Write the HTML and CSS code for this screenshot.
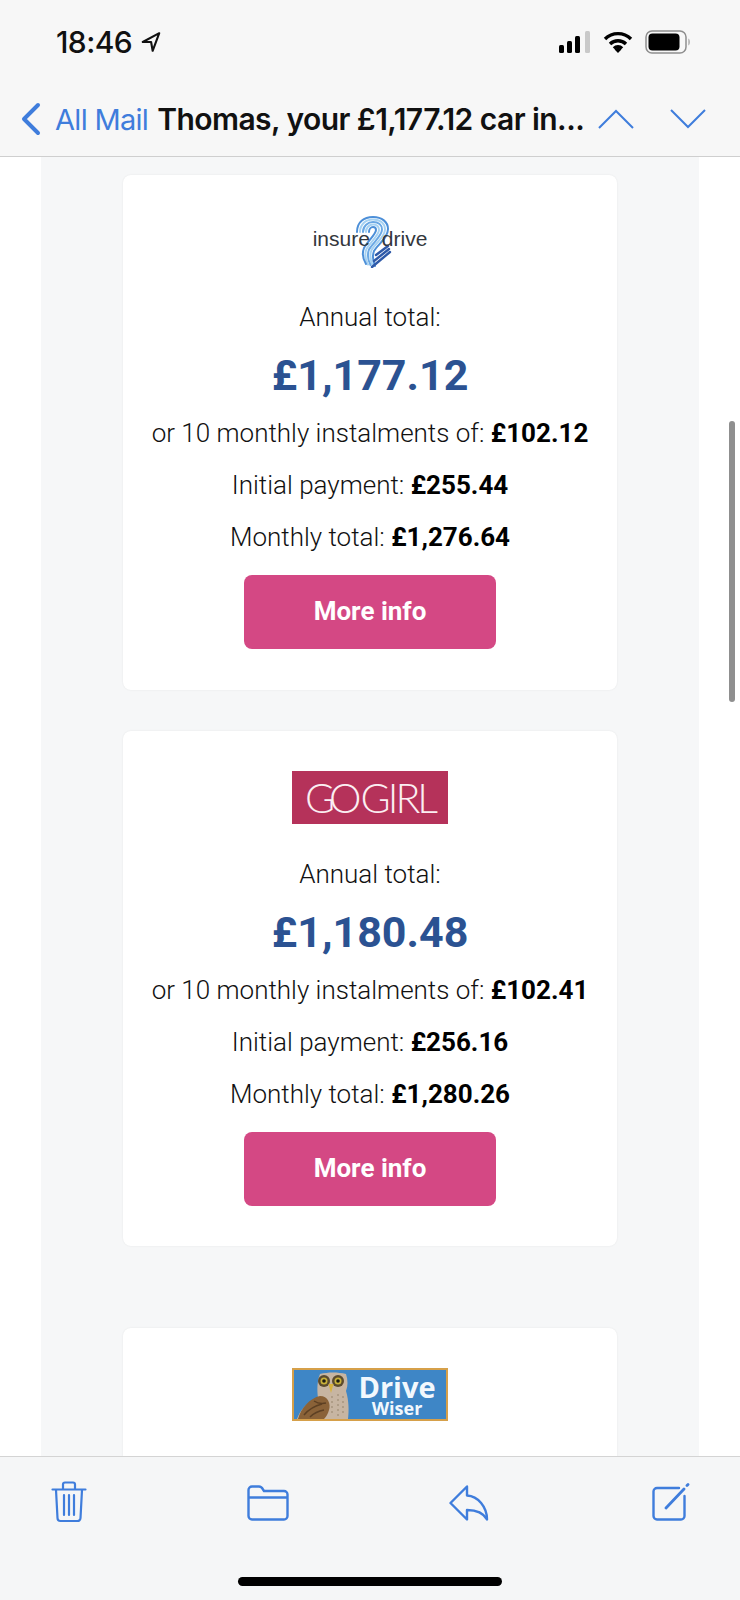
FILE: index.html
```html
<!DOCTYPE html>
<html lang="en">
<head>
    <meta charset="UTF-8">
    <meta name="viewport" content="width=device-width, initial-scale=1.0">
    <title>All Mail</title>
    <link rel="stylesheet" href="styles.css">
</head>
<body>

<div class="phone">
    <header class="top-bar">
        <div class="status">
            <div class="status-left">
                <span class="time">18:46</span>
                <svg class="loc" width="20" height="22" viewBox="0 0 18 20"><path d="M16.5 2 1.500 10h7.600l1.400 8z" fill="none" stroke="#111" stroke-width="1.900" stroke-linejoin="round"/></svg>
            </div>
            <div class="status-right">
                <svg width="32" height="22" viewBox="0 0 32 22"><rect x="0" y="14" width="5" height="8" rx="1.500" fill="#000"/><rect x="8" y="10" width="5" height="12" rx="1.500" fill="#000"/><rect x="16" y="5" width="5" height="17" rx="1.500" fill="#000"/><rect x="26" y="0" width="5" height="22" rx="1.500" fill="#c9c9c9"/></svg>
                <svg width="30" height="22" viewBox="0 0 30 22"><path d="M2 8a18.500 18.500 0 0 1 26 0M7 13a11.500 11.500 0 0 1 16 0M11 17.500a5.500 5.500 0 0 1 8 0" fill="none" stroke="#000" stroke-width="3.400"/><path d="M15 22l-3.400-3.600a5 5 0 0 1 6.800 0z" fill="#000"/></svg>
                <svg width="46" height="24" viewBox="0 0 46 24"><rect x="1" y="1" width="40" height="22" rx="6" fill="none" stroke="#8e8e8e" stroke-width="1.500"/><rect x="3.500" y="3.500" width="31" height="17" rx="4" fill="#000"/><path d="M43.500 8.500c1.500.8 1.500 6.200 0 7z" fill="#8e8e8e"/></svg>
            </div>
        </div>
        <nav class="mail-nav">
            <svg class="back" width="20" height="34" viewBox="0 0 20 34"><path d="M17 3 3 17l14 14" fill="none" stroke="#3f7ddc" stroke-width="4" stroke-linecap="round" stroke-linejoin="round"/></svg>
            <a class="back-label" href="#">All Mail</a>
            <span class="subject">Thomas, your £1,177.12 car in...</span>
            <svg class="arrow" width="36" height="20" viewBox="0 0 36 20"><path d="M1 19 18 2l17 17" fill="none" stroke="#3f7ddc" stroke-width="2"/></svg>
            <svg class="arrow arrow-down" width="36" height="20" viewBox="0 0 36 20"><path d="M1 1l17 17L35 1" fill="none" stroke="#3f7ddc" stroke-width="2"/></svg>
        </nav>
    </header>

    <main class="content">
        <div class="panel">
            <section class="card">
                <div class="logo logo-insure">
                    <span>insure</span>
                    <svg class="two" width="36" height="52" viewBox="0 0 36 52">
                        <g fill="none" stroke-linecap="round" stroke-width="2">
                            <path d="M1 16C1 6 8 1 17 1c9 0 15 5 15 12 0 9-10 15-14 22-2 5-1 10 1 15" stroke="#4c8fd8"/>
                            <path d="M4 16C4 8.500 9.500 3.500 17 3.500c7.500 0 12 4 12 10 0 7.500-9.500 13.500-13.500 20.500-2 5-1 10.500 1.200 15.500" stroke="#a6d2f2"/>
                            <path d="M7 16c0-6 5-10 10-10 5.500 0 9 3 9 7.500 0 6.500-9 13-13 20-2 5-1 10.500 1.500 15.500" stroke="#6aa8e4"/>
                            <path d="M10 16c0-4.500 3.500-7.500 7-7.500 3.500 0 6 2 6 5.500 0 5-8.500 12-12.500 19-2 4.500-1 10.500 1.500 15.500" stroke="#a6d2f2"/>
                            <path d="M13 16c0-3 2-5 4-5s3 1 3 3c0 4-8 11-12 18-2 5-1 11 2 16" stroke="#4c8fd8"/>
                            <path d="M16 51 34 36M18 45l15-12M20 39l12-9" stroke="#2f5aa8" stroke-width="2.400"/>
                        </g>
                    </svg>
                    <span>drive</span>
                </div>
                <p class="line">Annual total:</p>
                <p class="price">£1,177.12</p>
                <p class="line">or 10 monthly instalments of: <b>£102.12</b></p>
                <p class="line">Initial payment: <b>£255.44</b></p>
                <p class="line">Monthly total: <b>£1,276.64</b></p>
                <a class="more-btn" href="#">More info</a>
            </section>

            <section class="card">
                <div class="logo logo-gogirl"><span class="go">GO</span>GIRL</div>
                <p class="line">Annual total:</p>
                <p class="price">£1,180.48</p>
                <p class="line">or 10 monthly instalments of: <b>£102.41</b></p>
                <p class="line">Initial payment: <b>£256.16</b></p>
                <p class="line">Monthly total: <b>£1,280.26</b></p>
                <a class="more-btn" href="#">More info</a>
            </section>

            <section class="card">
                <div class="logo logo-wiser">
                    <svg class="owl" width="62" height="49" viewBox="0 0 62 49">
                        <path d="M26 4c8-2 18-2 26 0 2 6 2 12 0 17 3 10 3 20 2 28H3c3-9 10-17 21-21-1-8-1-17 2-24z" fill="#c7b5a2"/>
                        <path d="M4 49c3-11 12-21 22-23 8 0 11 8 9 14-1 4-3 7-5 9z" fill="#8a6238"/>
                        <path d="M10 45c5-6 10-9 18-11M16 47c4-4 8-6 14-7M20 31c3 2 7 3 12 2" stroke="#5d4023" stroke-width="1.500" fill="none"/>
                        <path d="M38 26v20M44 24v22M49 26v20" stroke="#a8957f" stroke-width="1.500" stroke-dasharray="2 3"/>
                        <circle cx="30" cy="11" r="6" fill="#5b4b2e"/>
                        <circle cx="44" cy="11" r="6" fill="#5b4b2e"/>
                        <circle cx="30" cy="11" r="3.500" fill="#c9b13a"/>
                        <circle cx="44" cy="11" r="3.500" fill="#c9b13a"/>
                        <circle cx="30" cy="11" r="1.800" fill="#1d1a12"/>
                        <circle cx="44" cy="11" r="1.800" fill="#1d1a12"/>
                        <path d="M34.500 14h5l-2.500 9z" fill="#d8b23a"/>
                    </svg>
                    <div class="wiser-text">
                        <span class="wiser-big">Drive</span>
                        <span class="wiser-small">Wiser</span>
                    </div>
                </div>
            </section>
        </div>
    </main>

    <div class="scrollbar"></div>

    <footer class="toolbar">
        <div class="tools">
            <svg width="36" height="42" viewBox="0 0 36 42" fill="none" stroke="#3f7ddc" stroke-width="2.200" stroke-linecap="round" stroke-linejoin="round"><path d="M1.500 8.500h33M12 8V3.500A2 2 0 0 1 14 1.500h8a2 2 0 0 1 2 2V8M5 9l1.500 28a3 3 0 0 0 3 3h17a3 3 0 0 0 3-3L31 9M13 14v20M18 14v20M23 14v20"/></svg>
            <svg class="tool-low" width="42" height="36" viewBox="0 0 42 36" fill="none" stroke="#3f7ddc" stroke-width="2.400" stroke-linecap="round" stroke-linejoin="round"><path d="M1.500 5a3.500 3.500 0 0 1 3.500-3.500h7c2 0 3 1 4 3l1 1.500h20a3.500 3.500 0 0 1 3.500 3.500V31a3.500 3.500 0 0 1-3.500 3.500H5A3.500 3.500 0 0 1 1.500 31zM1.500 12.500h39"/></svg>
            <svg class="tool-low" width="40" height="36" viewBox="0 0 40 36" fill="none" stroke="#3f7ddc" stroke-width="2.400" stroke-linecap="round" stroke-linejoin="round"><path d="M18 1.500 1.500 18 18 34.500V25c9 0 16 2 20 9.500C38 22 29 11 18 10.500z"/></svg>
            <svg class="tool-low tool-compose" width="38" height="38" viewBox="0 0 38 38" fill="none" stroke="#3f7ddc" stroke-width="2.400" stroke-linecap="round" stroke-linejoin="round"><path d="M27 5H5a3.500 3.500 0 0 0-3.500 3.500V33A3.500 3.500 0 0 0 5 36.500h24a3.500 3.500 0 0 0 3.500-3.500V13"/><path d="M14 25 32 6M35 2.500l1-1" stroke-width="2.800"/></svg>
        </div>
        <div class="home-bar"></div>
    </footer>
</div>

</body>
</html>
```

FILE: styles.css
```css
body {
    margin: 0;
    padding: 0;
    background: #fff;
    font-family: Roboto, "Liberation Sans", sans-serif;
}

.phone {
    position: relative;
    width: 740px;
    height: 1600px;
    display: flex;
    flex-direction: column;
    overflow: hidden;
}

/* top */
.top-bar {
    height: 157px;
    flex-shrink: 0;
    box-sizing: border-box;
    background: #f7f7f7;
    border-bottom: 1px solid #cfcfcf;
}

.status {
    display: flex;
    justify-content: space-between;
    align-items: center;
    padding: 26px 49px 0 56px;
    height: 32px;
}

.status-left {
    display: flex;
    align-items: center;
    gap: 9px;
}

.time {
    font-family: Inter, sans-serif;
    font-size: 30px;
    font-weight: 500;
    letter-spacing: -0.6px;
    color: #111;
}

.status-right {
    display: flex;
    align-items: center;
    gap: 12px;
}

.mail-nav {
    display: flex;
    align-items: center;
    margin-top: 43px;
    padding-left: 21px;
    height: 36px;
}

.back-label {
    margin-left: 14px;
    font-family: Inter, sans-serif;
    font-size: 29px;
    letter-spacing: -0.7px;
    color: #3f7ddc;
    text-decoration: none;
    white-space: nowrap;
}

.subject {
    margin-left: 9px;
    width: 425px;
    font-family: Inter, sans-serif;
    font-size: 30px;
    font-weight: 600;
    letter-spacing: -0.55px;
    color: #111;
    white-space: nowrap;
}

.arrow {
    margin-left: 16px;
}

.arrow-down {
    margin-left: 36px;
}

/* mail body */
.content {
    flex: 1;
    min-height: 0;
    overflow: hidden;
}

.panel {
    margin: 0 41px;
    padding: 18px 82px 0;
    height: 100%;
    box-sizing: border-box;
    background: #f6f7f8;
}

.card {
    box-sizing: border-box;
    height: 515px;
    margin-bottom: 41px;
    padding-top: 40px;
    background: #fff;
    border-radius: 8px;
    box-shadow: 0 0 2px rgba(0, 0, 0, 0.08);
    text-align: center;
}

.card + .card {
    margin-bottom: 82px;
}

.line {
    margin: 0;
    height: 52px;
    line-height: 52px;
    font-size: 26px;
    font-weight: 300;
    color: #111;
}

.line b {
    font-weight: 700;
    color: #000;
}

.price {
    margin: 0;
    height: 64px;
    line-height: 64px;
    font-size: 43px;
    font-weight: 700;
    color: #2b5292;
}

.more-btn {
    display: block;
    width: 252px;
    height: 74px;
    margin: 12px auto 0;
    line-height: 72px;
    background: #d44884;
    border-radius: 8px;
    color: #fff;
    font-size: 26px;
    font-weight: 700;
    text-decoration: none;
}

/* logos */
.logo {
    width: 156px;
    height: 53px;
    margin: 0 auto 23px;
    box-sizing: border-box;
}

.logo-insure {
    display: flex;
    align-items: center;
    justify-content: center;
    font-family: "Liberation Sans", sans-serif;
    font-size: 21px;
    color: #33373d;
}

.logo-insure .two {
    margin: 0 -10px 0 -14px;
    flex-shrink: 0;
}

.logo-insure span {
    position: relative;
    z-index: 1;
    margin-bottom: 6px;
}

.logo-gogirl {
    margin-bottom: 24px;
    background: #b5325a;
    color: #fbeef2;
    font-family: Lato, sans-serif;
    font-weight: 300;
    font-size: 41px;
    line-height: 53px;
    letter-spacing: -3px;
}

.go {
    letter-spacing: -6px;
    margin-right: 5px;
}

.logo-wiser {
    display: flex;
    background: #3e86c6;
    border: 2px solid #d6a04a;
}

.owl {
    flex-shrink: 0;
}

.wiser-text {
    display: flex;
    flex-direction: column;
    align-items: center;
    flex: 1;
    padding: 4px 8px 0 0;
    color: #f2f8fd;
    font-family: "Open Sans", sans-serif;
    font-weight: 700;
}

.wiser-big {
    font-size: 29px;
    line-height: 26px;
}

.wiser-small {
    font-size: 18px;
    line-height: 16px;
}

/* overlay */
.scrollbar {
    position: absolute;
    top: 421px;
    left: 729px;
    width: 6px;
    height: 281px;
    border-radius: 3px;
    background: #8f8f8f;
}

/* bottom */
.toolbar {
    height: 144px;
    flex-shrink: 0;
    box-sizing: border-box;
    background: #f5f6f7;
    border-top: 1px solid #d4d4d4;
    padding-top: 24px;
}

.tools {
    display: flex;
    gap: 160px;
    align-items: flex-end;
    height: 42px;
    padding-left: 51px;
}

.tool-low {
    margin-bottom: 2px;
}

.tool-compose {
    margin-left: 3px;
}

.home-bar {
    width: 264px;
    height: 9px;
    margin: 54px auto 0;
    border-radius: 5px;
    background: #000;
}
```
